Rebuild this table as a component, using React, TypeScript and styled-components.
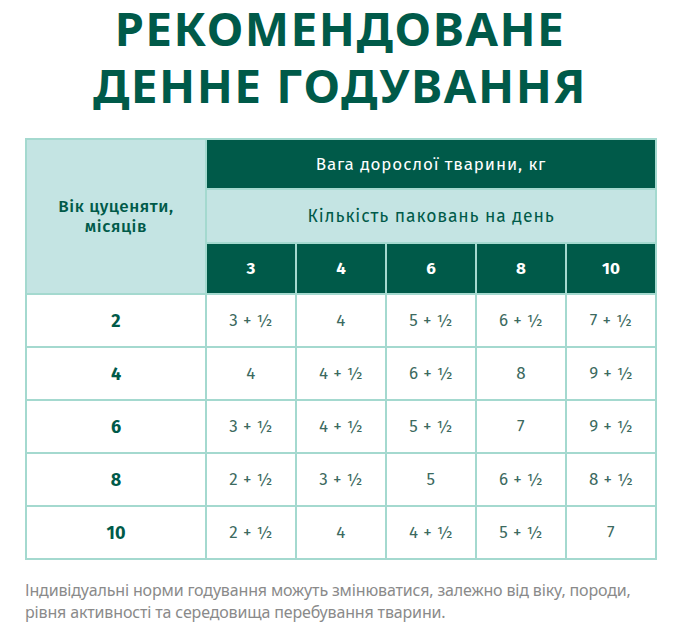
import React from 'react';
import styled, { createGlobalStyle } from 'styled-components';

const GlobalStyle = createGlobalStyle`
  html, body {
    margin: 0;
    padding: 0;
    background: #ffffff;
  }
  body {
    font-family: "Fira Sans", "Noto Sans", "Open Sans", sans-serif;
  }
`;

const DARK = '#005a49';
const LIGHT = '#c4e4e3';
const LINE = '#a4d9cf';

const weights = [3, 4, 6, 8, 10];

const rows: { age: number; values: string[] }[] = [
  { age: 2, values: ['3 + ½', '4', '5 + ½', '6 + ½', '7 + ½'] },
  { age: 4, values: ['4', '4 + ½', '6 + ½', '8', '9 + ½'] },
  { age: 6, values: ['3 + ½', '4 + ½', '5 + ½', '7', '9 + ½'] },
  { age: 8, values: ['2 + ½', '3 + ½', '5', '6 + ½', '8 + ½'] },
  { age: 10, values: ['2 + ½', '4', '4 + ½', '5 + ½', '7'] },
];

const App = () => (
  <>
    <GlobalStyle />
    <Page>
      <Title>
        <TitleLine>РЕКОМЕНДОВАНЕ</TitleLine>
        <TitleLine>ДЕННЕ ГОДУВАННЯ</TitleLine>
      </Title>
      <Table>
        <colgroup>
          <col style={{ width: 180 }} />
          {weights.map((w) => (
            <col key={w} style={{ width: 90 }} />
          ))}
        </colgroup>
        <tbody>
          <tr>
            <AgeHead rowSpan={3}>
              Вік цуценяти,
              <br />
              місяців
            </AgeHead>
            <DarkHead colSpan={5} $height={50}>
              Вага дорослої тварини, кг
            </DarkHead>
          </tr>
          <tr>
            <LightHead colSpan={5}>Кількість паковань на день</LightHead>
          </tr>
          <tr>
            {weights.map((w) => (
              <WeightHead key={w} $height={51}>
                {w}
              </WeightHead>
            ))}
          </tr>
          {rows.map((r) => (
            <tr key={r.age}>
              <AgeCell>{r.age}</AgeCell>
              {r.values.map((v, i) => (
                <ValueCell key={i}>{v}</ValueCell>
              ))}
            </tr>
          ))}
        </tbody>
      </Table>
      <Note>
        Індивідуальні норми годування можуть змінюватися, залежно від віку, породи,
        <br />
        рівня активності та середовища перебування тварини.
      </Note>
    </Page>
  </>
);

const Page = styled.div`
  width: 680px;
  height: 630px;
  padding: 0 25px;
  box-sizing: border-box;
  overflow: hidden;
`;

const Title = styled.h1`
  margin: 0 0 24px;
  text-align: center;
  color: ${DARK};
  font-family: "Noto Sans", "Open Sans", sans-serif;
  font-weight: 700;
  font-size: 47px;
  letter-spacing: 1.6px;
`;

const TitleLine = styled.span`
  display: block;
  height: 57px;
  line-height: 57px;
`;

const Table = styled.table`
  width: 630px;
  border-collapse: collapse;
  table-layout: fixed;
  border: 2px solid ${LINE};
`;

const Cell = styled.td`
  border: 2px solid ${LINE};
  text-align: center;
  vertical-align: middle;
  padding: 0;
  box-sizing: border-box;
`;

const AgeHead = styled(Cell)`
  background: ${LIGHT};
  color: ${DARK};
  font-size: 17px;
  font-weight: 500;
  line-height: 20px;
  letter-spacing: 0.6px;
`;

const DarkHead = styled(Cell)<{ $height: number }>`
  height: ${(p) => p.$height}px;
  background: ${DARK};
  color: #ffffff;
  font-size: 17px;
  letter-spacing: 0.9px;
`;

const LightHead = styled(Cell)`
  height: 54px;
  background: ${LIGHT};
  color: ${DARK};
  font-size: 17.5px;
  letter-spacing: 0.9px;
`;

const WeightHead = styled(DarkHead)`
  font-size: 17px;
  font-weight: 700;
  letter-spacing: 0;
`;

const AgeCell = styled(Cell)`
  height: 53px;
  color: ${DARK};
  font-size: 18px;
  font-weight: 700;
`;

const ValueCell = styled(Cell)`
  height: 53px;
  color: #3c6a60;
  font-size: 17px;
  letter-spacing: 0.3px;
`;

const Note = styled.p`
  margin: 19px 0 0;
  color: #8a8a8a;
  font-family: "Noto Sans", "Open Sans", sans-serif;
  font-size: 16px;
  line-height: 22px;
  letter-spacing: -0.15px;
`;

export default App;
